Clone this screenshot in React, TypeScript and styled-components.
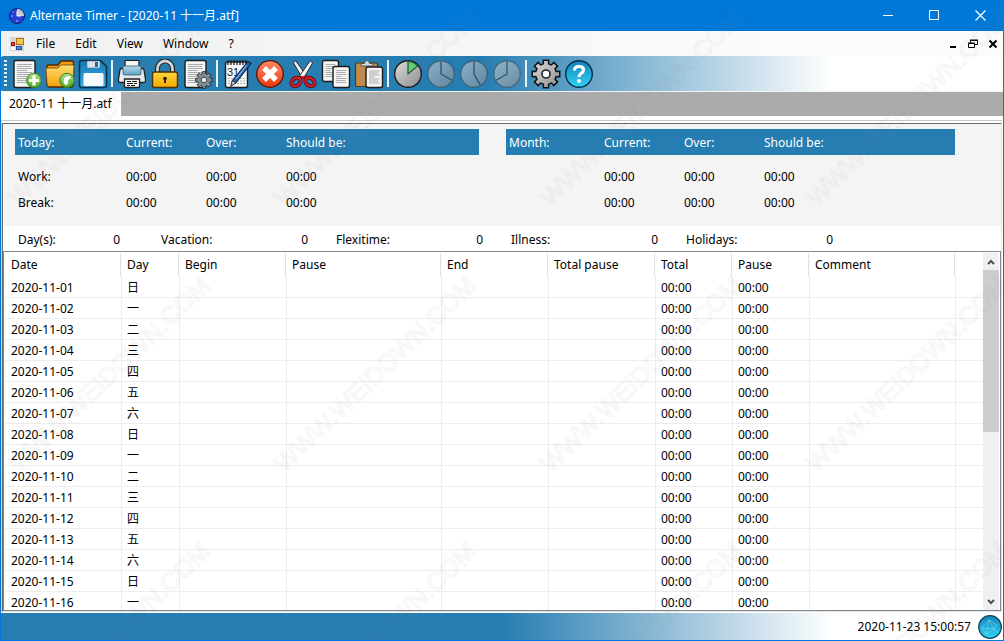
import React from "react";
import styled, { createGlobalStyle } from "styled-components";

const BLUE = "#267db1";
const FRAME = "#0078d7";

const GlobalStyle = createGlobalStyle`
  *, *::before, *::after { box-sizing: border-box; }
  body {
    margin: 0;
    font-family: "Noto Sans", "Noto Sans CJK SC", sans-serif;
    font-size: 12px;
    line-height: 20px;
    color: #000;
  }
  button { font: inherit; color: inherit; border: 0; padding: 0; margin: 0; background: none; }
  svg { display: block; }
`;

const Shell = styled.div`
  position: relative;
  display: flex;
  flex-direction: column;
  height: 100vh;
  min-height: 400px;
  overflow: hidden;
  border: 1px solid ${FRAME};
  border-top: 0;
  background: #fff;
`;

const TitleBar = styled.header`
  display: flex;
  align-items: center;
  flex: none;
  height: 31px;
  padding-left: 8px;
  gap: 5px;
  background: ${FRAME};
  color: #fff;
`;

const Title = styled.h1`
  flex: 1;
  margin: 0;
  font-size: 12px;
  font-weight: 400;
  white-space: nowrap;
`;

const CaptionGroup = styled.div`
  display: flex;
`;

const CaptionButton = styled.button`
  display: grid;
  place-items: center;
  width: 46px;
  height: 31px;
`;

const MenuBar = styled.nav`
  display: flex;
  align-items: center;
  flex: none;
  height: 25px;
  padding-left: 8px;
  background: linear-gradient(90deg, #f0f0f0, #fbfbfb 80%);
`;

const MenuItem = styled.button`
  height: 24px;
  padding: 0 10px;
  &:first-of-type { margin-left: 1px; }
`;

const MenuSpacer = styled.div`
  flex: 1;
`;

const ChildButton = styled.button`
  display: grid;
  place-items: center;
  width: 20px;
  height: 20px;
`;

const ToolBar = styled.div`
  display: flex;
  align-items: center;
  flex: none;
  height: 36px;
  padding-left: 3px;
  border-bottom: 1px solid #f4f4f4;
  border-radius: 2px;
  background: linear-gradient(90deg, ${BLUE} 48%, #fff 83%);
`;

const Grip = styled.div`
  width: 3px;
  height: 28px;
  margin-right: 3px;
  background: repeating-linear-gradient(180deg, #dcebf4 0 2px, transparent 2px 4px);
`;

const ToolButton = styled.button`
  display: grid;
  place-items: center;
  width: 33px;
  height: 34px;

  &:disabled { opacity: 0.55; }
`;

const Separator = styled.div`
  width: 2px;
  height: 27px;
  margin: 0 2px;
  background: #e6f0f6;
`;

const TabStrip = styled.div`
  display: flex;
  flex: none;
  height: 24px;
  background: #ababab;
`;

const Tab = styled.button`
  padding: 0 9px 0 8px;
  background: #fff;
  white-space: nowrap;
`;

const Client = styled.main`
  display: flex;
  flex-direction: column;
  flex: 1;
  min-height: 0;
  margin: 4px 1px 1px 0;
  border-top: 1px solid #c8c8c8;
  border-left: 1px solid #d0d0d0;
`;

const Document = styled.div`
  display: flex;
  flex-direction: column;
  flex: 1;
  min-height: 0;
  margin-top: 2px;
  border: 1px solid #696969;
  border-right-color: #e3e3e3;
  border-bottom-color: #e3e3e3;
`;

const Summary = styled.section`
  display: grid;
  grid-template-columns: 464fr 449fr;
  gap: 27px;
  flex: none;
  height: 102px;
  padding: 5px 46px 0 12px;
  background: #f4f4f4;
`;

const TimeRow = styled.div<{ $first: number; $head?: boolean }>`
  display: grid;
  grid-template-columns: ${(p) => p.$first}px 80px 80px 1fr;
  align-items: center;
  height: 26px;
  padding: 2px 0 0 3px;
  margin-bottom: ${(p) => (p.$head ? 8 : 0)}px;
  background: ${(p) => (p.$head ? BLUE : "transparent")};
  color: ${(p) => (p.$head ? "#fff" : "#000")};
  white-space: nowrap;
`;

const Counters = styled.dl`
  display: flex;
  align-items: center;
  flex: none;
  gap: 28px;
  height: 25px;
  margin: 0;
  padding: 2px 0 0 15px;
`;

const Counter = styled.div<{ $first?: boolean }>`
  display: flex;
  justify-content: space-between;
  width: ${(p) => (p.$first ? 102 : 147)}px;
  margin-right: ${(p) => (p.$first ? 13 : 0)}px;
  dd { margin: 0; }
`;

const ListView = styled.section`
  display: flex;
  flex: 1;
  min-height: 0;
  padding: 1px 1px 0;
  border: 1px solid #828790;
`;

const ListBody = styled.div`
  flex: 1;
  min-width: 0;
  overflow: hidden;
`;

const Table = styled.table`
  width: 100%;
  table-layout: fixed;
  border-collapse: separate;
  border-spacing: 0;
`;

const HeadCell = styled.th`
  height: 24px;
  padding: 0 0 0 6px;
  border-right: 1px solid #e0e0e0;
  text-align: left;
  font-weight: 400;
  white-space: nowrap;
  &:last-child { border-right: 0; }
`;

const Cell = styled.td`
  height: 21px;
  padding: 2px 0 0 5px;
  border-left: 1px solid #ededed;
  border-bottom: 1px solid #ededed;
  line-height: 18px;
  white-space: nowrap;
  &:first-child { border-left: 0; padding-left: 6px; }
`;

const ScrollBar = styled.div`
  display: flex;
  flex-direction: column;
  flex: none;
  width: 16px;
  background: #f0f0f0;
`;

const ScrollButton = styled.button`
  display: grid;
  place-items: center;
  height: 17px;
`;

const Track = styled.div`
  flex: 1;
`;

const Thumb = styled.div`
  height: 50%;
  background: #cdcdcd;
`;

const StatusBar = styled.footer`
  display: flex;
  align-items: center;
  justify-content: flex-end;
  flex: none;
  gap: 7px;
  height: 27px;
  padding-right: 1px;
  background: linear-gradient(90deg, ${BLUE} 50%, #fff 83%);
`;

const WatermarkLayer = styled.svg`
  position: absolute;
  inset: 0;
  width: 100%;
  height: 100%;
  pointer-events: none;
`;

/* ---------- icons ---------- */

const Icon = ({ children }: { children: React.ReactNode }) => (
  <svg width="30" height="30" viewBox="0 0 30 30" aria-hidden="true">{children}</svg>
);

const Sheet = ({ x, y, w, h }: { x: number; y: number; w: number; h: number }) => {
  const count = Math.floor((h - 6) / 2);
  return (
    <g>
      <rect x={x} y={y} width={w} height={h} rx="2" fill="#f4f4f4" stroke="#1c1c1c" strokeWidth="1.4" />
      {Array.from({ length: count }, (_, i) => (
        <path
          key={i}
          d={`M${x + 3} ${y + 4 + i * 2}h${w - 6 - (i % 4 === 3 ? 5 : i % 2)}`}
          stroke="#a4a4a4"
          strokeWidth="0.9"
        />
      ))}
    </g>
  );
};

const gearPath = (cx: number, cy: number, outer: number, inner: number) => {
  const points: string[] = [];
  for (let i = 0; i < 8; i++) {
    const mid = (i * Math.PI) / 4;
    const corners: [number, number][] = [[-0.25, inner], [-0.19, outer], [0.19, outer], [0.25, inner]];
    corners.forEach(([d, r]) => {
      points.push(`${(cx + r * Math.sin(mid + d)).toFixed(2)} ${(cy - r * Math.cos(mid + d)).toFixed(2)}`);
    });
  }
  return `M${points.join("L")}Z`;
};

const NewIcon = () => (
  <Icon>
    <Sheet x={2} y={1.5} w={21} h={27} />
    <circle cx="22" cy="21.5" r="7.3" fill="url(#green)" stroke="#3d7d22" />
    <path d="M22 16.500v10M17 21.500h10" stroke="#fff" strokeWidth="3.200" />
  </Icon>
);

const OpenIcon = () => (
  <Icon>
    <path d="M2 9V7q0-1 1-1h10l3-4h11q1.500 0 1.500 1.500V25q0 3-3 3H4.500Q2 28 2 25z" fill="#f39a12" stroke="#4a2a05" strokeWidth="1.300" />
    <path d="M1 10q0-1 1-1h11l3-3h12q1 0 1 1l-1 18q0 2.500-3 2.500H4.500Q2 27.500 2 25z" fill="url(#folder)" stroke="#6b3d05" strokeWidth="0.8" />
    <circle cx="22" cy="21.500" r="7.200" fill="url(#green)" stroke="#3d7d22" />
    <path d="M25.500 17q-7 0-7 5 0 2.500 2 4.500l3-2q-2-3.500 2-5z" fill="#fff" />
  </Icon>
);

const SaveIcon = () => (
  <Icon>
    <path d="M3.500 1.500h19l6 6V26q0 2.500-2.500 2.500H4Q1.500 28.500 1.500 26V4q0-2.500 2-2.500z" fill="url(#disk)" stroke="#0b2c45" strokeWidth="1.500" />
    <path d="M9 2h13v6q0 1-1 1H10q-1 0-1-1z" fill="#dce3e8" stroke="#46799c" strokeWidth="0.6" />
    <rect x="17" y="3" width="3" height="5" fill="#23669a" />
    <rect x="5.500" y="14" width="20" height="13" rx="1.500" fill="#f8fbfd" />
  </Icon>
);

const PrintIcon = () => (
  <Icon>
    <rect x="8" y="1.500" width="14" height="10" rx="1" fill="#f5f5f5" stroke="#1c1c1c" strokeWidth="1.200" />
    <path d="M3 11q0-1.500 1.500-1.500h21Q27 9.500 27 11l1.500 9v2q0 1.500-1.500 1.500H3q-1.500 0-1.500-1.500v-2z" fill="#e9edef" stroke="#1c1c1c" strokeWidth="1.300" />
    <rect x="6" y="7" width="18" height="9" rx="1.500" fill="url(#glass)" stroke="#315e74" strokeWidth="0.8" />
    <path d="M7.500 20h15v7.500q0 1-1 1h-13q-1 0-1-1z" fill="#fff" stroke="#1c1c1c" strokeWidth="1.300" />
    <path d="M10 22.500h4m1 0h5M10 24.500h6m1 0h3M10 26.500h3m1 0h4" stroke="#111" strokeWidth="1.200" />
  </Icon>
);

const LockIcon = () => (
  <Icon>
    <path d="M7.500 15V9.500a7.500 7.500 0 0 1 15 0V15" fill="none" stroke="#222" strokeWidth="5" />
    <path d="M7.500 15V9.500a7.500 7.500 0 0 1 15 0V15" fill="none" stroke="#d4d4d4" strokeWidth="2.800" />
    <rect x="2.500" y="13" width="25" height="15.500" rx="2" fill="url(#gold)" stroke="#4a3100" strokeWidth="1.400" />
    <circle cx="15" cy="19.500" r="1.800" fill="#221700" />
    <path d="M15 19v5" stroke="#221700" strokeWidth="1.800" />
  </Icon>
);

const PageSetupIcon = () => (
  <Icon>
    <Sheet x={2} y={1.5} w={21} h={27} />
    <path d={gearPath(21, 21, 8.5, 6.5)} fill="#7f8b93" stroke="#2d3336" strokeWidth="1" />
    <circle cx="21" cy="21" r="2.800" fill="#e8eaeb" stroke="#414a50" />
  </Icon>
);

const CalendarIcon = () => (
  <Icon>
    <rect x="3.500" y="3" width="22" height="25.500" rx="2" fill="#f7f7f7" stroke="#1c1c1c" strokeWidth="1.400" />
    <path d="M6 1v5M9 1v5M12 1v5M15 1v5M18 1v5M21 1v5M24 1v5" stroke="#222" strokeWidth="1.300" />
    <text x="5" y="17" fontSize="11" fontFamily="Liberation Sans, sans-serif" fill="#16222b">31</text>
    <path d="M6 19.500h17M6 22h17M6 24.500h17" stroke="#a9b3b9" strokeDasharray="2 1" />
    <path d="M26 2.500l3 2L14 23.500l-5 3.500 1.500-5.500z" fill="#2464b4" stroke="#0e2440" strokeWidth="1.100" />
    <path d="M24.500 6.500L14 20" stroke="#8fbdf0" strokeWidth="1.200" />
    <path d="M10.500 21.500l3 2.500-4.500 3z" fill="#e2e2e2" stroke="#222" strokeWidth="0.7" />
  </Icon>
);

const DeleteIcon = () => (
  <Icon>
    <circle cx="15" cy="15" r="13.300" fill="url(#red)" stroke="#5a1203" strokeWidth="1.300" />
    <path d="M9 9l12 12M21 9L9 21" stroke="#fff" strokeWidth="5.400" />
  </Icon>
);

const CutIcon = () => (
  <Icon>
    <path d="M5.500 4L7.500 1.500 18.500 17l-3.500 3z" fill="#f2f2f2" stroke="#2a2a2a" strokeWidth="1" />
    <path d="M24.500 4L22.500 1.500 11.500 17l3.500 3z" fill="#fdfdfd" stroke="#2a2a2a" strokeWidth="1" />
    <path d="M15 18l-3.500 1.500M15 18l3.500 1.500" stroke="#b5121c" strokeWidth="3.500" />
    <g fill="none" stroke="#560509" strokeWidth="3.800">
      <ellipse cx="8" cy="23" rx="5" ry="3.800" transform="rotate(-35 8 23)" />
      <ellipse cx="22" cy="23" rx="5" ry="3.800" transform="rotate(35 22 23)" />
    </g>
    <g fill="none" stroke="#d31f2a" strokeWidth="2.400">
      <ellipse cx="8" cy="23" rx="5" ry="3.800" transform="rotate(-35 8 23)" />
      <ellipse cx="22" cy="23" rx="5" ry="3.800" transform="rotate(35 22 23)" />
    </g>
  </Icon>
);

const CopyIcon = () => (
  <Icon>
    <Sheet x={1.5} y={1.5} w={16} h={21} />
    <Sheet x={12} y={7.5} w={16.5} h={21} />
  </Icon>
);

const PasteIcon = () => (
  <Icon>
    <rect x="1.500" y="4" width="22" height="23.500" rx="1.500" fill="#c08a4a" stroke="#573711" strokeWidth="1.200" />
    <path d="M7 7V4.500h3.500Q11 1.500 13 1.500t2.500 3H19V7z" fill="#d9dde0" stroke="#50565a" />
    <Sheet x={12} y={8} w={16.5} h={20.5} />
  </Icon>
);

const ClockIcon = ({ angle, slice }: { angle: number; slice?: boolean }) => {
  const a = (angle * Math.PI) / 180;
  const x = 15 + 12.5 * Math.sin(a);
  const y = 15 - 12.5 * Math.cos(a);
  return (
    <Icon>
      <circle cx="15" cy="15" r="13.300" fill="url(#silver)" stroke={slice ? "#1d1d1d" : "#4a5257"} strokeWidth="1.400" />
      <path
        d={slice ? `M15 15V2.500A12.500 12.500 0 0 1 ${x} ${y}Z` : `M15 2.500V15L${x} ${y}`}
        fill={slice ? "#62cf78" : "none"}
        stroke={slice ? "#1c5c2c" : "#22282c"}
        strokeWidth="1.200"
      />
    </Icon>
  );
};

const SettingsIcon = () => (
  <Icon>
    <path d={gearPath(15, 15, 14, 10.5)} fill="url(#silver)" stroke="#111" strokeWidth="1.500" />
    <circle cx="15" cy="15" r="4" fill="#fff" stroke="#222" strokeWidth="1.600" />
  </Icon>
);

const HelpIcon = () => (
  <Icon>
    <circle cx="15" cy="15" r="13.300" fill="url(#aqua)" stroke="#052f48" strokeWidth="1.400" />
    <path d="M10.500 11.500q0-4 4.500-4 4.500 0 4.500 3.500 0 2-2.500 3.500-2 1.200-2 3.500" fill="none" stroke="#fff" strokeWidth="3.200" />
    <circle cx="15" cy="22" r="2" fill="#fff" />
  </Icon>
);

const Gradients = () => (
  <svg width="0" height="0" aria-hidden="true">
    <defs>
      <linearGradient id="green" x2="0" y2="1"><stop stopColor="#b6e38a" /><stop offset="1" stopColor="#3fa51f" /></linearGradient>
      <linearGradient id="folder" x2="0" y2="1"><stop stopColor="#ffdf6b" /><stop offset="1" stopColor="#f5a010" /></linearGradient>
      <linearGradient id="disk" x2="0" y2="1"><stop stopColor="#1b76b4" /><stop offset="1" stopColor="#2cb4ea" /></linearGradient>
      <linearGradient id="glass" x2="0" y2="1"><stop stopColor="#b8dbe8" /><stop offset="1" stopColor="#5ea4c2" /></linearGradient>
      <linearGradient id="gold" x2="0" y2="1"><stop stopColor="#ffd53c" /><stop offset="1" stopColor="#f3a900" /></linearGradient>
      <linearGradient id="red" x2="0" y2="1"><stop stopColor="#ff8a66" /><stop offset="1" stopColor="#e63a10" /></linearGradient>
      <linearGradient id="silver" x2="1" y2="1"><stop stopColor="#dedede" /><stop offset="1" stopColor="#8d8d8d" /></linearGradient>
      <linearGradient id="aqua" x2="0" y2="1"><stop stopColor="#1583bb" /><stop offset="1" stopColor="#2fd3f5" /></linearGradient>
    </defs>
  </svg>
);

const AppLogo = () => (
  <svg width="16" height="16" viewBox="0 0 16 16" aria-hidden="true">
    <circle cx="8" cy="8" r="7.500" fill="#2a3fd6" stroke="#101c70" />
    <path d="M8 8V.8A7.200 7.200 0 0 1 15.200 8z" fill="#c9c9c9" />
    <path d="M8 8V3M8 8h4" stroke="#fff" />
    <path d="M2 8h2M8 12v2M3.500 3.500l1 1" stroke="#a9b4ff" />
  </svg>
);

const FormLogo = () => (
  <svg width="16" height="16" viewBox="0 0 16 16" aria-hidden="true">
    <rect x="1" y="1" width="14" height="14" fill="#d5d5d5" />
    <rect x="7.500" y="2.500" width="7" height="6" fill="#f7c64a" stroke="#a9761a" />
    <rect x="2.500" y="6.500" width="3" height="3" fill="#d5453a" stroke="#8c1d14" />
    <rect x="7.500" y="10.500" width="5" height="3" fill="#4b83dd" stroke="#2353a0" />
    <rect x="2" y="11" width="4" height="3" fill="#fff" />
  </svg>
);

const Globe = () => (
  <svg width="24" height="24" viewBox="0 0 24 24" aria-hidden="true">
    <circle cx="12" cy="12" r="11.300" fill="url(#aqua)" stroke="#0b3f58" strokeWidth="1.200" />
    <path d="M4 13l7-8 5 9-8 5zM11 5l8 5-3 4 4 4M8 19L11 5M4 13l12 1" fill="none" stroke="#bdf2ff" strokeWidth="0.6" opacity="0.6" />
  </svg>
);

/* ---------- data ---------- */

type Tool = { label: string; icon: React.ReactNode; disabled?: boolean };

const toolGroups: Tool[][] = [
  [
    { label: "New", icon: <NewIcon /> },
    { label: "Open", icon: <OpenIcon /> },
    { label: "Save", icon: <SaveIcon /> },
  ],
  [
    { label: "Print", icon: <PrintIcon /> },
    { label: "Lock", icon: <LockIcon /> },
    { label: "Page setup", icon: <PageSetupIcon /> },
  ],
  [
    { label: "Edit day", icon: <CalendarIcon /> },
    { label: "Delete", icon: <DeleteIcon /> },
    { label: "Cut", icon: <CutIcon /> },
    { label: "Copy", icon: <CopyIcon /> },
    { label: "Paste", icon: <PasteIcon /> },
  ],
  [
    { label: "Begin work", icon: <ClockIcon angle={50} slice /> },
    { label: "Begin pause", icon: <ClockIcon angle={120} />, disabled: true },
    { label: "End pause", icon: <ClockIcon angle={150} />, disabled: true },
    { label: "End work", icon: <ClockIcon angle={240} />, disabled: true },
  ],
  [
    { label: "Settings", icon: <SettingsIcon /> },
    { label: "Help", icon: <HelpIcon /> },
  ],
];

const columns = [
  { title: "Date", width: 116 },
  { title: "Day", width: 58 },
  { title: "Begin", width: 107 },
  { title: "Pause", width: 155 },
  { title: "End", width: 107 },
  { title: "Total pause", width: 107 },
  { title: "Total", width: 77 },
  { title: "Pause", width: 77 },
  { title: "Comment", width: 146 },
];

const weekdays = ["日", "一", "二", "三", "四", "五", "六"];
const days = Array.from({ length: 16 }, (_, i) => ({
  date: `2020-11-${String(i + 1).padStart(2, "0")}`,
  day: weekdays[i % 7],
}));

const counters = ["Day(s):", "Vacation:", "Flexitime:", "Illness:", "Holidays:"];

const TimeBlock = ({ title, first, labels }: { title: string; first: number; labels: [string, string] }) => (
  <div>
    <TimeRow $first={first} $head>
      <span>{title}</span>
      <span>Current:</span>
      <span>Over:</span>
      <span>Should be:</span>
    </TimeRow>
    {labels.map((label, i) => (
      <TimeRow $first={first} key={i}>
        <span>{label}</span>
        <span>00:00</span>
        <span>00:00</span>
        <span>00:00</span>
      </TimeRow>
    ))}
  </div>
);

export default function App() {
  return (
    <Shell>
      <GlobalStyle />
      <TitleBar>
        <AppLogo />
        <Title>Alternate Timer - [2020-11 十一月.atf]</Title>
        <CaptionGroup>
          <CaptionButton aria-label="Minimize">
            <svg width="11" height="11"><path d="M0 5.500h10" stroke="#fff" /></svg>
          </CaptionButton>
          <CaptionButton aria-label="Maximize">
            <svg width="11" height="11"><path d="M.5.5h9v9h-9z" fill="none" stroke="#fff" /></svg>
          </CaptionButton>
          <CaptionButton aria-label="Close">
            <svg width="11" height="11"><path d="M.5.5l10 10M10.500.5l-10 10" stroke="#fff" strokeWidth="1.200" /></svg>
          </CaptionButton>
        </CaptionGroup>
      </TitleBar>

      <MenuBar>
        <FormLogo />
        {["File", "Edit", "View", "Window", "?"].map((item) => (
          <MenuItem key={item}>{item}</MenuItem>
        ))}
        <MenuSpacer />
        <ChildButton aria-label="Minimize document">
          <svg width="10" height="10"><path d="M2 8h6" stroke="#000" strokeWidth="2" /></svg>
        </ChildButton>
        <ChildButton aria-label="Restore document">
          <svg width="10" height="10" fill="none" stroke="#000">
            <path d="M2.500 4V1.500h7v4H7M2 1h8" />
            <path d="M.5 4.500h6v4h-6zM0 4h7" />
          </svg>
        </ChildButton>
        <ChildButton aria-label="Close document">
          <svg width="10" height="10"><path d="M1.500 1.500l7 7M8.500 1.500l-7 7" stroke="#000" strokeWidth="2" /></svg>
        </ChildButton>
      </MenuBar>

      <ToolBar role="toolbar">
        <Grip />
        {toolGroups.map((group, g) => (
          <React.Fragment key={g}>
            {g > 0 && <Separator />}
            {group.map((tool) => (
              <ToolButton key={tool.label} aria-label={tool.label} disabled={tool.disabled}>
                {tool.icon}
              </ToolButton>
            ))}
          </React.Fragment>
        ))}
      </ToolBar>

      <TabStrip>
        <Tab>2020-11 十一月.atf</Tab>
      </TabStrip>

      <Client>
        <Document>
          <Summary>
            <TimeBlock title="Today:" first={108} labels={["Work:", "Break:"]} />
            <TimeBlock title="Month:" first={95} labels={["", ""]} />
          </Summary>

          <Counters>
            {counters.map((name, i) => (
              <Counter key={name} $first={i === 0}>
                <dt>{name}</dt>
                <dd>0</dd>
              </Counter>
            ))}
          </Counters>

          <ListView>
            <ListBody>
              <Table>
                <colgroup>
                  {columns.map((c, i) => (
                    <col key={i} width={c.width} />
                  ))}
                  <col />
                </colgroup>
                <thead>
                  <tr>
                    {columns.map((c, i) => (
                      <HeadCell key={i}>{c.title}</HeadCell>
                    ))}
                    <HeadCell />
                  </tr>
                </thead>
                <tbody>
                  {days.map((d) => (
                    <tr key={d.date}>
                      <Cell>{d.date}</Cell>
                      <Cell>{d.day}</Cell>
                      <Cell />
                      <Cell />
                      <Cell />
                      <Cell />
                      <Cell>00:00</Cell>
                      <Cell>00:00</Cell>
                      <Cell />
                      <Cell />
                    </tr>
                  ))}
                </tbody>
              </Table>
            </ListBody>
            <ScrollBar>
              <ScrollButton aria-label="Scroll up">
                <svg width="8" height="6"><path d="M1 5l3-3 3 3" fill="none" stroke="#505050" strokeWidth="2" /></svg>
              </ScrollButton>
              <Track>
                <Thumb />
              </Track>
              <ScrollButton aria-label="Scroll down">
                <svg width="8" height="6"><path d="M1 1l3 3 3-3" fill="none" stroke="#505050" strokeWidth="2" /></svg>
              </ScrollButton>
            </ScrollBar>
          </ListView>
        </Document>
      </Client>

      <StatusBar>
        <time dateTime="2020-11-23T15:00:57">2020-11-23 15:00:57</time>
        <Globe />
      </StatusBar>

      <WatermarkLayer aria-hidden="true">
        <defs>
          <pattern id="watermark" width="266" height="266" patternUnits="userSpaceOnUse">
            <text
              x="108"
              y="117"
              transform="rotate(-44 108 108)"
              textAnchor="middle"
              fontFamily="Liberation Sans, sans-serif"
              fontSize="25"
              fill="none"
              stroke="#808080"
              strokeWidth="1.500"
              strokeOpacity="0.07"
            >
              WWW.WEIDOWN.COM
            </text>
          </pattern>
        </defs>
        <rect width="100%" height="100%" fill="url(#watermark)" />
      </WatermarkLayer>
      <Gradients />
    </Shell>
  );
}
